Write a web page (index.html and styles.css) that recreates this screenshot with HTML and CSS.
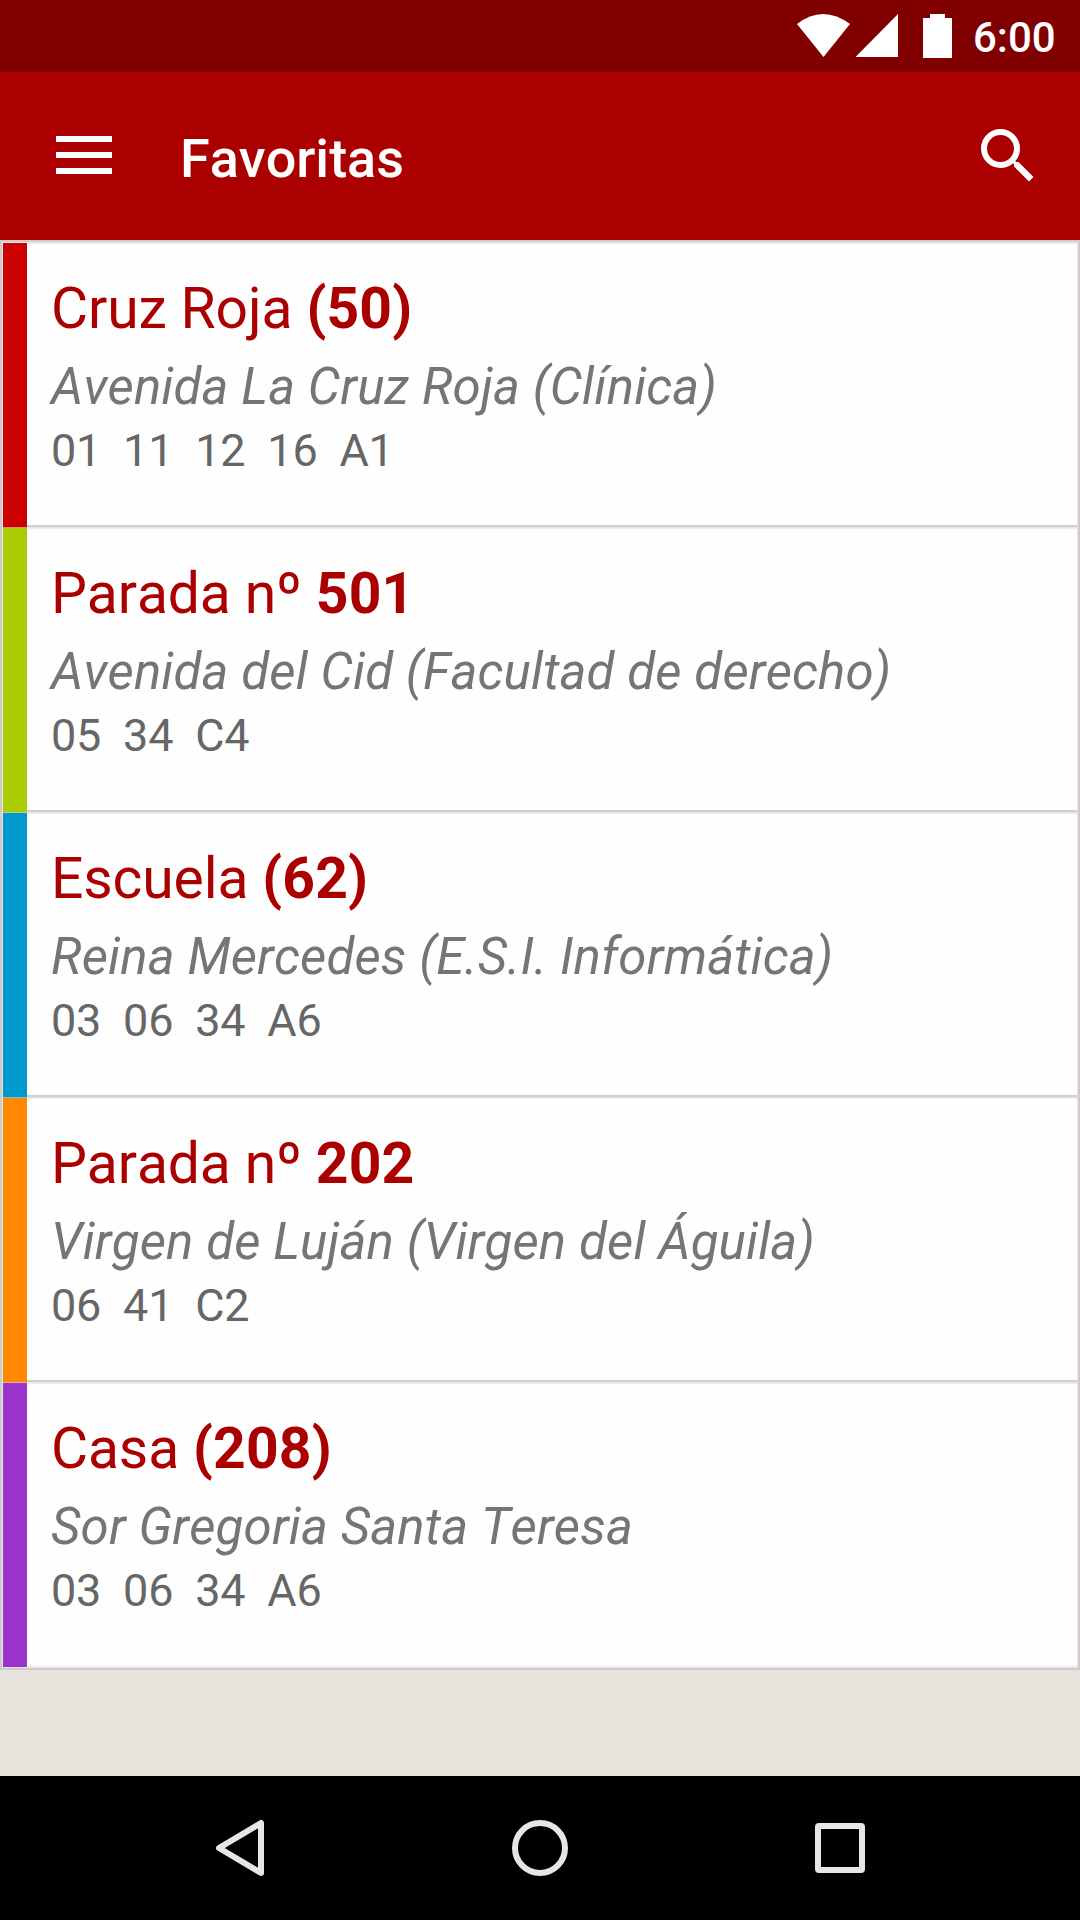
FILE: index.html
```html
<!DOCTYPE html>
<html lang="es">
<head>
<meta charset="utf-8">
<title>Favoritas</title>
<link rel="stylesheet" href="styles.css">
</head>
<body>
<div class="screen">
<div class="status">
<svg class="signals" width="164" height="48" viewBox="794 12 164 48" fill="#fff"><path d="M797 24Q823 4 850 24L823.500 57Z"/><path d="M898 14V57H855.500Z"/><path d="M923 18h7v-4h15v4h7v40h-29z"/></svg>
<span class="clock">6:00</span>
</div>
<header class="toolbar">
<svg class="menu" width="56" height="38" viewBox="0 0 56 38" fill="#fff"><path d="M0 0h56v6H0zM0 16h56v6H0zM0 32h56v6H0z"/></svg>
<h1>Favoritas</h1>
<svg class="search" width="72" height="72" viewBox="0 0 24 24" fill="#fff"><path d="M15.500 14h-.79l-.28-.27A6.471 6.471 0 0 0 16 9.500 6.500 6.500 0 1 0 9.500 16c1.610 0 3.090-.59 4.230-1.570l.27.28v.79l5 4.990L20.490 19l-4.990-5zm-6 0C7.010 14 5 11.990 5 9.500S7.010 5 9.500 5 14 7.010 14 9.500 11.990 14 9.500 14z"/></svg>
</header>
<main class="list">
<article class="stop red"><div class="info"><h2>Cruz Roja <b>(50)</b></h2><p class="address">Avenida La Cruz Roja (Clínica)</p><p class="lines">01  11  12  16  A1</p></div></article>
<article class="stop green"><div class="info"><h2>Parada nº <b>501</b></h2><p class="address">Avenida del Cid (Facultad de derecho)</p><p class="lines">05  34  C4</p></div></article>
<article class="stop blue"><div class="info"><h2>Escuela <b>(62)</b></h2><p class="address">Reina Mercedes (E.S.I. Informática)</p><p class="lines">03  06  34  A6</p></div></article>
<article class="stop orange"><div class="info"><h2>Parada nº <b>202</b></h2><p class="address">Virgen de Luján (Virgen del Águila)</p><p class="lines">06  41  C2</p></div></article>
<article class="stop purple"><div class="info"><h2>Casa <b>(208)</b></h2><p class="address">Sor Gregoria Santa Teresa</p><p class="lines">03  06  34  A6</p></div></article>
</main>
<nav class="navbar">
<svg width="1080" height="144" viewBox="0 1776 1080 144" fill="none" stroke="#e6e6e6" stroke-width="6" stroke-linejoin="round"><path d="M261 1823V1873L219 1848Z"/><circle cx="540" cy="1848" r="25"/><rect x="818" y="1826" width="44" height="44" rx="1"/></svg>
</nav>
</div>
</body>
</html>
```
FILE: styles.css
```css
* { box-sizing: border-box; }
body { margin: 0; font-family: Roboto, sans-serif; font-kerning: none; }
svg { display: block; flex: none; }
.screen { width: 1080px; height: 1920px; display: flex; flex-direction: column; background: #e7e3dd; }
.status { height: 72px; background: #800000; display: flex; align-items: center; justify-content: flex-end; padding-right: 24px; }
.clock { width: 83px; margin: 3px 0 0 15px; color: #fff; font-size: 42px; font-weight: 500; line-height: 48px; white-space: nowrap; }
.toolbar { height: 168px; background: #ab0000; display: flex; align-items: center; padding: 0 36px 0 56px; }
.menu { margin-bottom: 2px; }
.toolbar h1 { margin: 6px auto 0 68px; color: #fff; font-size: 54px; font-weight: 500; line-height: 64px; }
.list { height: 1430px; border: 2px solid #cfcbca; background: #e7e5e4; padding: 1px; }
.stop { height: 285px; display: flex; }
.stop::before { content: ""; width: 24px; height: 284px; background: var(--accent); border-bottom: 2px solid rgba(207, 203, 202, .7); }
.stop:last-child { height: 284px; }
.stop:last-child::before { border-bottom: 0; }
.info { flex: 1; padding: 30px 24px 0; background: #fefefe; border-top: 1px solid #f0eeed; border-bottom: 2px solid #d2cecd; height: 284px; }
.stop:last-child .info { border-bottom: 1px solid #f0eeed; }
.stop h2 { margin: 0; color: #ab0000; font-size: 57px; line-height: 70px; font-weight: 400; letter-spacing: -.13px; }
.stop h2 b { letter-spacing: .15px; }
.stop p { margin: 0; white-space: pre; }
.stop .address { margin-top: 13px; color: #757575; font-size: 51px; line-height: 60px; font-style: italic; letter-spacing: .15px; }
.stop .lines { color: #666; font-size: 45px; line-height: 68px; letter-spacing: -.2px; }
.red { --accent: #c00; }
.green { --accent: #ac0; }
.blue { --accent: #09c; }
.orange { --accent: #f80; }
.purple { --accent: #93c; }
.navbar { height: 144px; margin-top: auto; background: #000; }
```
